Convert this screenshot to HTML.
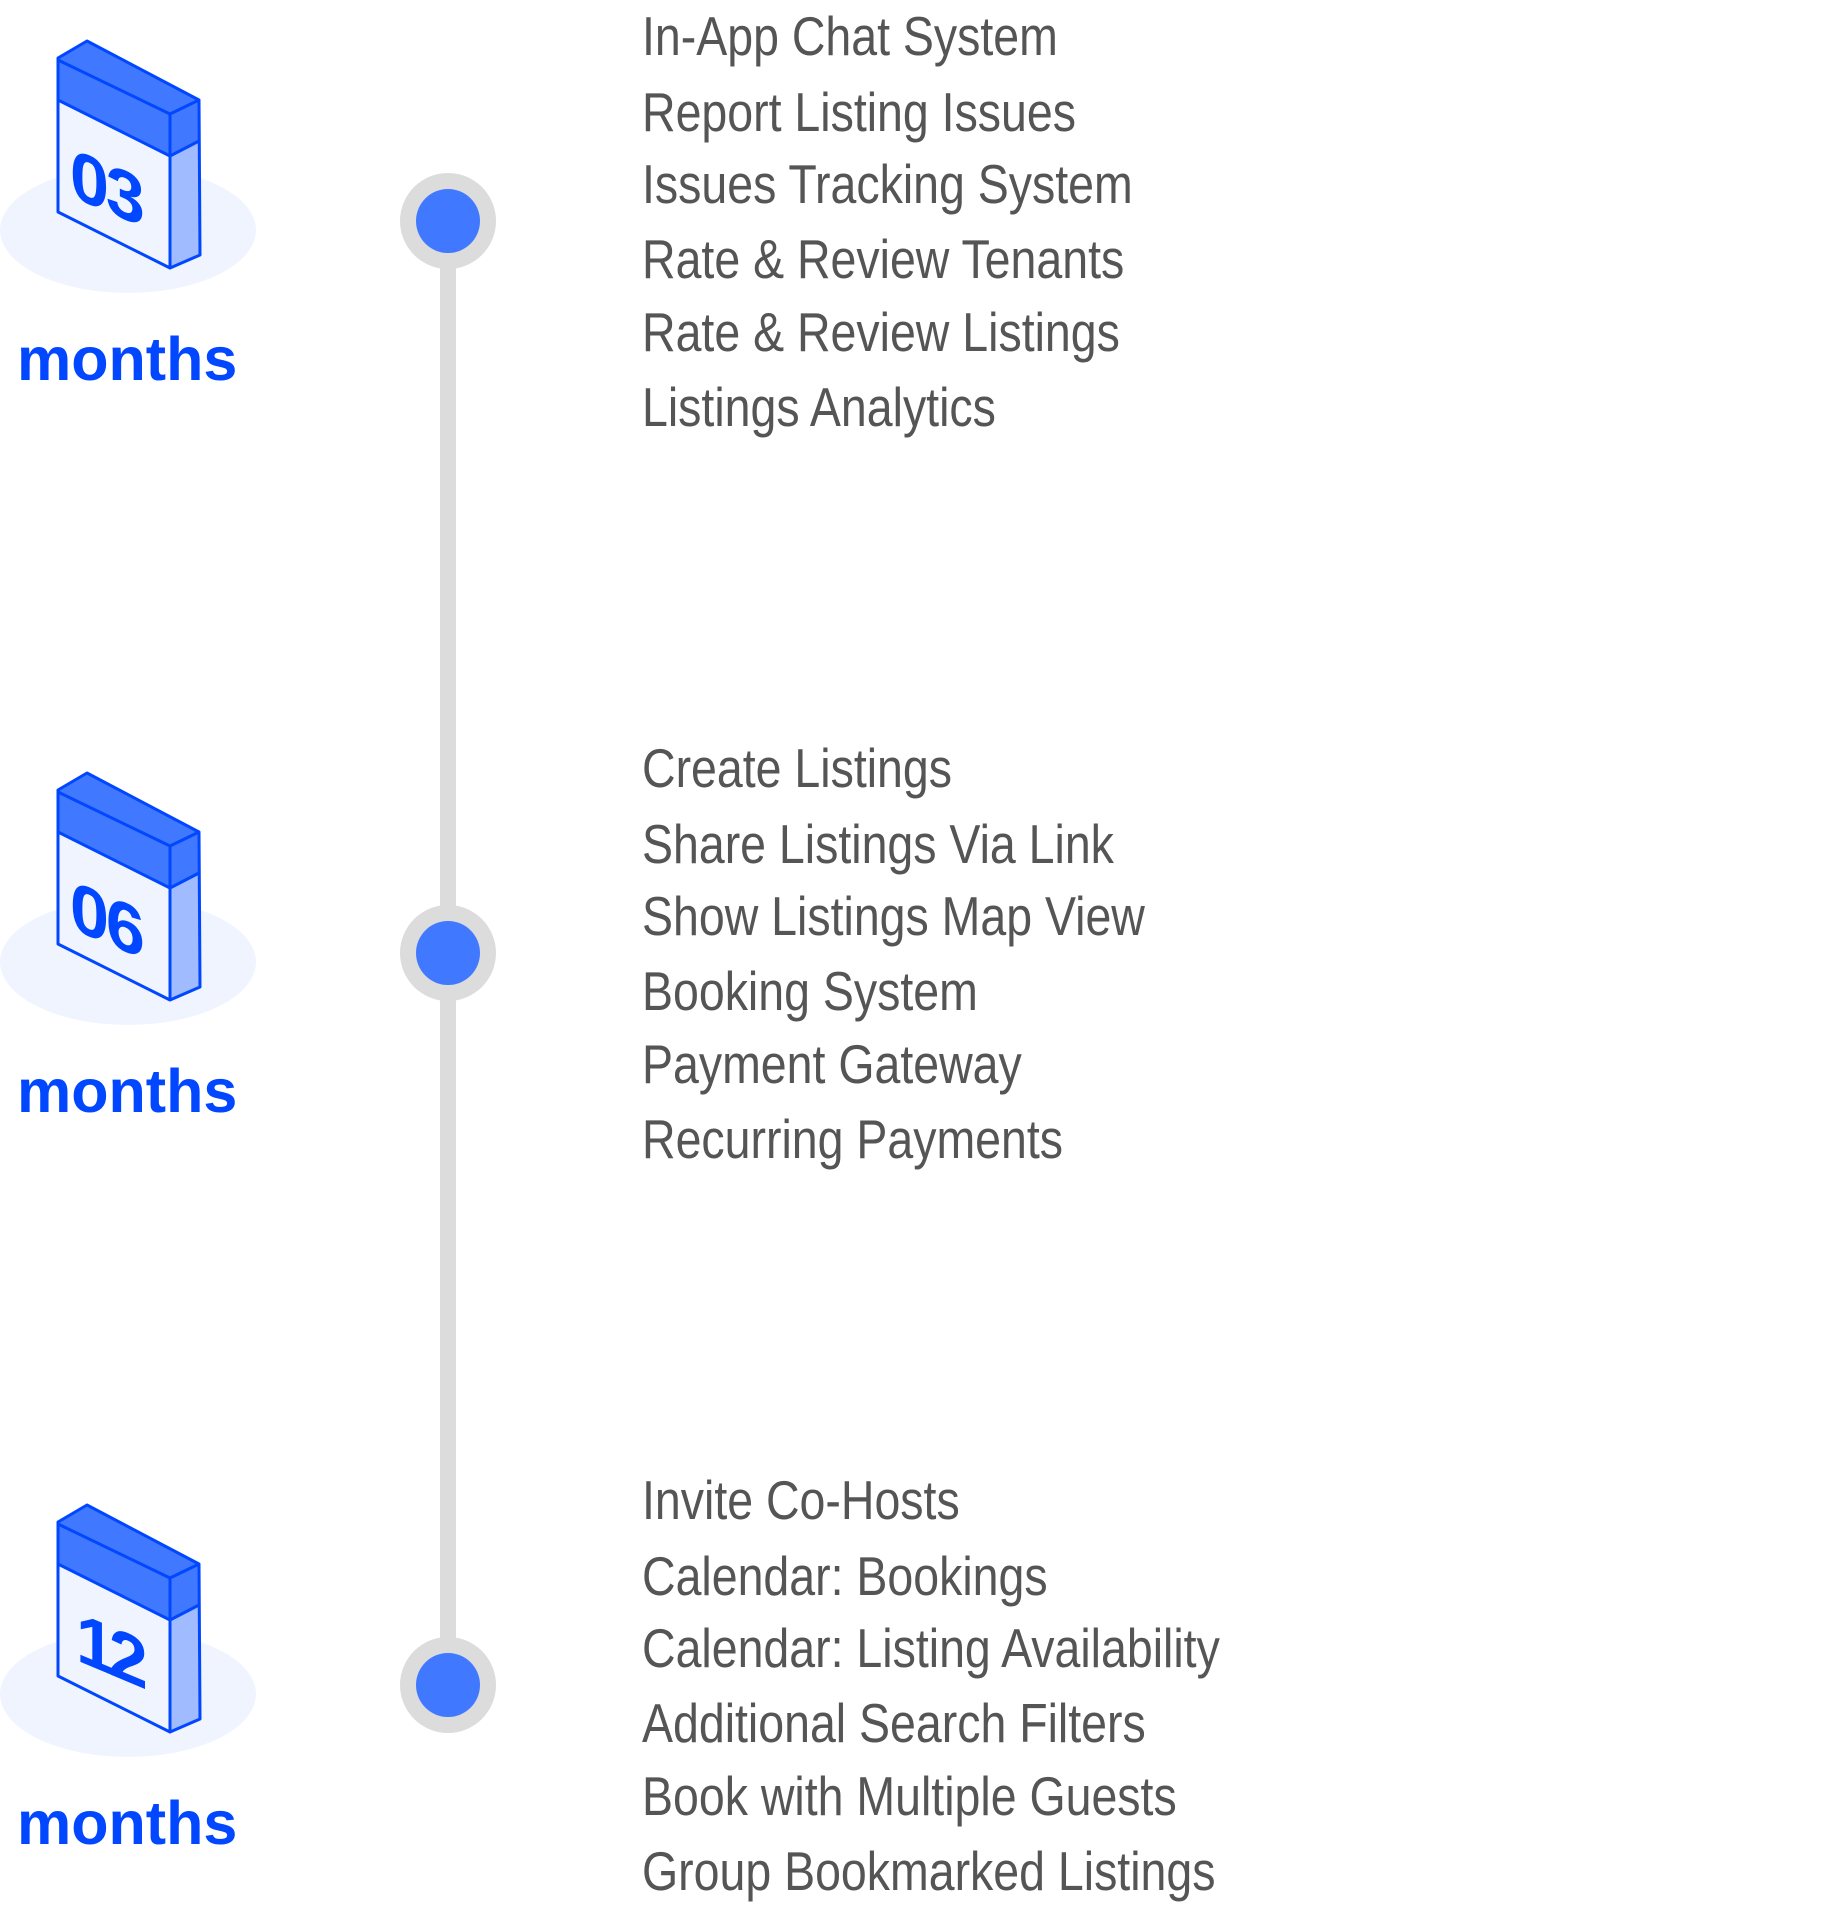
<!DOCTYPE html>
<html><head><meta charset="utf-8"><style>
html,body{margin:0;padding:0;background:#fff;width:1824px;height:1908px;overflow:hidden;position:relative}
.t{position:absolute;left:642px;font-family:"Liberation Sans",sans-serif;font-size:55px;color:#555;white-space:nowrap;transform:scaleX(0.845);transform-origin:0 0;line-height:1}
.m{position:absolute;left:17px;font-family:"Liberation Sans",sans-serif;font-weight:bold;font-size:61px;color:#0047ff;line-height:1;letter-spacing:0px}
svg{position:absolute;left:0}
</style></head><body>
<div style="position:absolute;left:440px;top:221px;width:16px;height:1464px;background:#dcdcdc"></div>

<svg width="1824" height="1908" style="top:0">
<defs>
<g id="cal">
<ellipse cx="128" cy="230" rx="128" ry="63" fill="#eff4ff"/>
<polygon points="58,58 170,113 199,100 199,255 170,268 58,212" fill="#eff4ff"/>
<polygon points="170,156 199,141 200,255 170,268" fill="#a0bbff"/>
<polygon points="58,58 87,41 199,100 199,141 170,156 58,100" fill="#4079ff"/>
<g fill="none" stroke="#0047ff" stroke-width="3" stroke-linejoin="round">
<polygon points="58,58 87,41 199,100 200,255 170,268 58,212"/>
<polyline points="58,60 170,114 199,100"/>
<polyline points="58,100 170,156 199,141"/>
<line x1="170" y1="114" x2="170" y2="268"/>
</g>
</g>
</defs>
<g><use href="#cal"/><text transform="matrix(1,0.42,0,1,70,196)" font-family="Liberation Sans,sans-serif" font-weight="bold" font-size="70" fill="#0047ff" letter-spacing="-3">03</text></g>
<g transform="translate(0,732)"><use href="#cal"/><text transform="matrix(1,0.42,0,1,70,196)" font-family="Liberation Sans,sans-serif" font-weight="bold" font-size="70" fill="#0047ff" letter-spacing="-3">06</text></g>
<g transform="translate(0,1464)"><use href="#cal"/><text transform="matrix(1,0.42,0,1,76,196)" font-family="Liberation Sans,sans-serif" font-weight="bold" font-size="70" fill="#0047ff" letter-spacing="-6">12</text></g>
<g fill="#dcdcdc"><circle cx="448" cy="221" r="48"/><circle cx="448" cy="953" r="48"/><circle cx="448" cy="1685" r="48"/></g>
<g fill="#4079ff"><circle cx="448" cy="221" r="32"/><circle cx="448" cy="953" r="32"/><circle cx="448" cy="1685" r="32"/></g>
</svg>

<div class="m" style="top:329px">months</div>
<div class="m" style="top:1061px">months</div>
<div class="m" style="top:1793px">months</div>

<div class="t" style="top:9px">In-App Chat System</div>
<div class="t" style="top:85px">Report Listing Issues</div>
<div class="t" style="top:157px">Issues Tracking System</div>
<div class="t" style="top:232px">Rate &amp; Review Tenants</div>
<div class="t" style="top:305px">Rate &amp; Review Listings</div>
<div class="t" style="top:380px">Listings Analytics</div>

<div class="t" style="top:741px">Create Listings</div>
<div class="t" style="top:817px">Share Listings Via Link</div>
<div class="t" style="top:889px">Show Listings Map View</div>
<div class="t" style="top:964px">Booking System</div>
<div class="t" style="top:1037px">Payment Gateway</div>
<div class="t" style="top:1112px">Recurring Payments</div>

<div class="t" style="top:1473px">Invite Co-Hosts</div>
<div class="t" style="top:1549px">Calendar: Bookings</div>
<div class="t" style="top:1621px">Calendar: Listing Availability</div>
<div class="t" style="top:1696px">Additional Search Filters</div>
<div class="t" style="top:1769px">Book with Multiple Guests</div>
<div class="t" style="top:1844px">Group Bookmarked Listings</div>
</body></html>
